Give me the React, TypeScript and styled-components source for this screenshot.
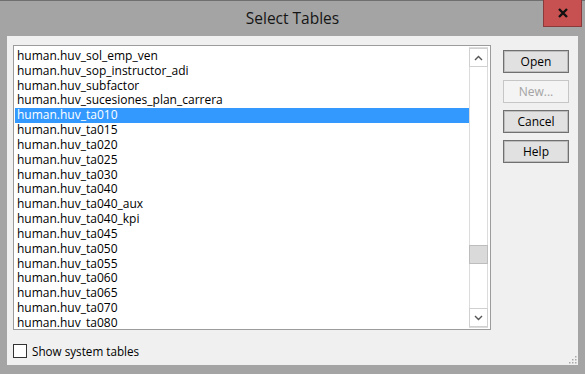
import React from "react";
import styled, { createGlobalStyle } from "styled-components";

const Global = createGlobalStyle`
  html, body { margin: 0; padding: 0; }
  body { width: 585px; height: 374px; overflow: hidden; background: #a3a3a3; }
`;

const FONT = `"Open Sans", "Noto Sans", "DejaVu Sans", sans-serif`;

const Window = styled.div`
  width: 585px;
  height: 374px;
  box-sizing: border-box;
  background: #a4a4a4;
  border-top: 1px solid #6f6f6f;
  display: flex;
  flex-direction: column;
  font-family: ${FONT};
`;

const TitleBar = styled.div`
  position: relative;
  height: 35px;
  display: flex;
  align-items: center;
  justify-content: center;
  color: #151515;
  font-size: 15.5px;
  padding-bottom: 2px;
  box-sizing: border-box;
`;

const CloseButton = styled.div`
  position: absolute;
  top: -1px;
  right: 3px;
  width: 39px;
  height: 27px;
  box-sizing: border-box;
  background: #c75050;
  border: 1px solid #8a3a3a;
  border-top: none;
  display: flex;
  align-items: center;
  justify-content: center;
`;

const Client = styled.div`
  margin: 0 7px 0 7px;
  height: 329px;
  background: #f0f0f0;
  display: flex;
  flex-direction: column;
  position: relative;
  box-sizing: border-box;
  padding: 9px 0 0 6px;
`;

const Top = styled.div`
  display: flex;
  gap: 12px;
`;

const ListBox = styled.div`
  width: 478px;
  height: 285px;
  box-sizing: border-box;
  border: 1px solid #9c9c9c;
  background: #fff;
  display: flex;
  padding: 1px 2px 1px 1px;
`;

const Items = styled.div`
  flex: 1;
  overflow: hidden;
  padding-top: 2px;
`;

const Item = styled.div<{ $selected?: boolean }>`
  height: 14.83px;
  line-height: 14.83px;
  font-size: 12px;
  padding-left: 2px;
  white-space: nowrap;
  color: ${(p) => (p.$selected ? "#fff" : "#000")};
  background: ${(p) => (p.$selected ? "#3399ff" : "transparent")};
`;

const ScrollBar = styled.div`
  width: 19px;
  box-sizing: border-box;
  border: 1px solid #dcdcdc;
  background: #fff;
  display: flex;
  flex-direction: column;
`;

const Arrow = styled.div`
  height: 19px;
  box-sizing: border-box;
  border: 1px solid #d0d0d0;
  margin: 0 -1px;
  display: flex;
  align-items: center;
  justify-content: center;
  background: #fff;
`;

const Track = styled.div`
  flex: 1;
  position: relative;
`;

const Thumb = styled.div`
  position: absolute;
  left: -1px;
  right: -1px;
  top: 178px;
  height: 19px;
  box-sizing: border-box;
  background: #dadada;
  border: 1px solid #bdbdbd;
`;

const Buttons = styled.div`
  display: flex;
  flex-direction: column;
  gap: 7px;
  padding-top: 5px;
`;

const Button = styled.div<{ $disabled?: boolean }>`
  width: 66px;
  height: 23px;
  box-sizing: border-box;
  display: flex;
  align-items: center;
  justify-content: center;
  font-size: 12px;
  color: ${(p) => (p.$disabled ? "#a3a3a3" : "#000")};
  background: ${(p) => (p.$disabled ? "#f4f4f4" : "#e1e1e1")};
  border: 1px solid ${(p) => (p.$disabled ? "#c6c6c6" : "#707070")};
  box-shadow: ${(p) => (p.$disabled ? "none" : "inset 0 0 0 1px #bdbdbd")};
`;

const CheckRow = styled.div`
  display: flex;
  align-items: center;
  gap: 5px;
  margin-top: 13px;
  font-size: 11.7px;
  color: #000;
`;

const Box = styled.div`
  width: 14px;
  height: 14px;
  box-sizing: border-box;
  border: 1px solid #333;
  background: #fff;
`;

const Grip = styled.svg`
  position: absolute;
  right: 1px;
  bottom: 1px;
`;

const items = [
  "human.huv_sol_emp_ven",
  "human.huv_sop_instructor_adi",
  "human.huv_subfactor",
  "human.huv_sucesiones_plan_carrera",
  "human.huv_ta010",
  "human.huv_ta015",
  "human.huv_ta020",
  "human.huv_ta025",
  "human.huv_ta030",
  "human.huv_ta040",
  "human.huv_ta040_aux",
  "human.huv_ta040_kpi",
  "human.huv_ta045",
  "human.huv_ta050",
  "human.huv_ta055",
  "human.huv_ta060",
  "human.huv_ta065",
  "human.huv_ta070",
  "human.huv_ta080",
];

export default function App() {
  return (
    <>
      <Global />
      <Window>
        <TitleBar>
          Select Tables
          <CloseButton>
            <svg width="12" height="10" viewBox="0 0 12 10">
              <path d="M2 1 L10 9 M10 1 L2 9" stroke="#111" strokeWidth="2.4" />
            </svg>
          </CloseButton>
        </TitleBar>
        <Client>
          <Top>
            <ListBox>
              <Items>
                {items.map((t) => (
                  <Item key={t} $selected={t === "human.huv_ta010"}>
                    {t}
                  </Item>
                ))}
              </Items>
              <ScrollBar>
                <Arrow>
                  <svg width="9" height="6" viewBox="0 0 9 6">
                    <path d="M1 5 L4.5 1.5 L8 5" stroke="#555" strokeWidth="1.4" fill="none" />
                  </svg>
                </Arrow>
                <Track>
                  <Thumb />
                </Track>
                <Arrow>
                  <svg width="9" height="6" viewBox="0 0 9 6">
                    <path d="M1 1 L4.5 4.5 L8 1" stroke="#555" strokeWidth="1.4" fill="none" />
                  </svg>
                </Arrow>
              </ScrollBar>
            </ListBox>
            <Buttons>
              <Button>Open</Button>
              <Button $disabled>New...</Button>
              <Button>Cancel</Button>
              <Button>Help</Button>
            </Buttons>
          </Top>
          <CheckRow>
            <Box />
            Show system tables
          </CheckRow>
          <Grip width="10" height="10" viewBox="0 0 10 10">
            {[
              [8, 2], [8, 5], [5, 5], [8, 8], [5, 8], [2, 8],
            ].map(([x, y], i) => (
              <rect key={i} x={x} y={y} width="1.5" height="1.5" fill="#a8a8a8" />
            ))}
          </Grip>
        </Client>
      </Window>
    </>
  );
}
